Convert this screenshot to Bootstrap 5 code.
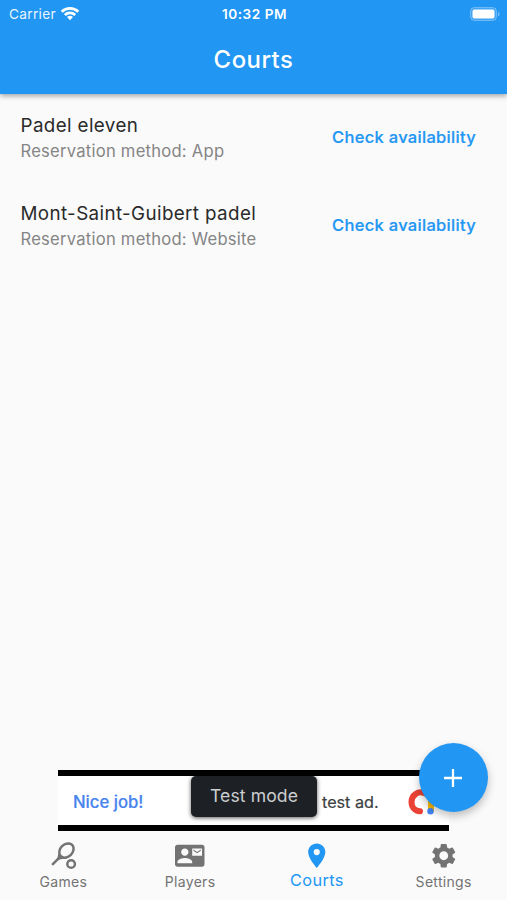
<!DOCTYPE html>
<html lang="en">
<head>
<meta charset="utf-8">
<meta name="viewport" content="width=device-width, initial-scale=1">
<title>Courts</title>
<link rel="stylesheet" href="https://cdn.jsdelivr.net/npm/bootstrap@5.3.0/dist/css/bootstrap.min.css">
<style>
body{font-family:Inter,"Liberation Sans",sans-serif;background:#fafafa;color:#2a2a2a;height:900px;overflow:hidden}
svg{display:block}
.app-top{background:#2196f3;height:94px;box-shadow:0 2px 5px rgba(0,0,0,.35);color:#fff;flex:none}
.status-bar{height:27px;padding:0 7px 0 9px}
.status-bar>div{flex:1 1 0}
.carrier{font-size:13.7px;letter-spacing:.3px;opacity:.9;padding-top:1px}
.clock{font-size:13.6px;font-weight:600;letter-spacing:.5px;padding-top:1px}
.page-title{font-size:23.9px;font-weight:500;letter-spacing:.5px;height:67px}
.court{height:88px;padding:0 31px 0 20.5px}
.court-name{font-size:18.8px;line-height:26px;letter-spacing:.38px}
.court-method{font-size:16.6px;line-height:24px;color:#858585;letter-spacing:.24px}
.court-link{font-size:16.5px;font-weight:500;color:#2196f3;letter-spacing:.3px;-webkit-text-stroke:.2px #2196f3;padding-bottom:2px}
.ad-banner{width:391px;height:61px;background:#fff;border-top:6px solid #000;border-bottom:6px solid #000;margin-left:58px}
.ad-lead{font-size:16.7px;font-weight:500;-webkit-text-stroke:.2px #4884ee;color:#4884ee;left:15px;top:14px;line-height:24px}
.ad-copy{font-size:16.2px;font-weight:400;-webkit-text-stroke:.2px #3c4043;color:#3c4043;left:264px;top:14px;line-height:24px}
.ad-logo{left:348px;top:11px}
.test-chip{left:133px;top:0;width:126px;height:41px;background:#1d2126;color:#ccced0;border-radius:5px;font-size:17.6px;letter-spacing:.1px;box-shadow:0 1px 4px rgba(0,0,0,.65)}
.fab{width:69px;height:69px;left:360.5px;top:-33px;background:#2196f3;box-shadow:0 4px 8px rgba(0,0,0,.25)}
.tabs{height:69px;flex:none;color:#737373;background:#fafafa}
.tab{flex:1 1 0;padding-top:10px;font-size:14px;letter-spacing:.3px;line-height:20px}
.tab svg{margin-bottom:1px}
.tab-on{color:#2196f3;font-size:16.3px;letter-spacing:.4px}
.tab-on svg{margin-bottom:-1px}
</style>
</head>
<body class="d-flex flex-column">
<header class="app-top position-relative">
  <div class="status-bar d-flex align-items-center">
    <div class="d-flex align-items-center gap-1">
      <span class="carrier">Carrier</span>
      <svg width="20" height="15" viewBox="0 0 20 15"><g fill="none" stroke="#fff" stroke-width="2.7"><path d="M1.7 5.7a12 12 0 0 1 16.6 0"/><path d="M4.800 9a7.600 7.600 0 0 1 10.400 0"/></g><path fill="#fff" d="M10 14.200l-3-3.100a4.300 4.300 0 0 1 6 0z"/></svg>
    </div>
    <span class="clock">10:32 PM</span>
    <div class="d-flex justify-content-end">
      <svg width="30" height="14" viewBox="0 0 30 14"><rect x=".5" y=".5" width="26" height="13" rx="4" fill="#fff" fill-opacity=".15" stroke="#fff" stroke-opacity=".3"/><rect x="2.500" y="2.500" width="22" height="9" rx="2" fill="#fff"/><path d="M28 4.700v4.600c2-.8 2-3.800 0-4.600z" fill="#fff" opacity=".4"/></svg>
    </div>
  </div>
  <h1 class="page-title d-flex align-items-center justify-content-center m-0">Courts</h1>
</header>
<main class="flex-grow-1">
  <div class="court d-flex align-items-center justify-content-between">
    <div><div class="court-name">Padel eleven</div><div class="court-method">Reservation method: App</div></div>
    <a class="court-link text-decoration-none" href="#">Check availability</a>
  </div>
  <div class="court d-flex align-items-center justify-content-between">
    <div><div class="court-name">Mont-Saint-Guibert padel</div><div class="court-method">Reservation method: Website</div></div>
    <a class="court-link text-decoration-none" href="#">Check availability</a>
  </div>
</main>
<section class="ad-banner position-relative flex-shrink-0">
  <span class="ad-lead position-absolute text-nowrap">Nice job!</span>
  <span class="ad-copy position-absolute text-nowrap">test ad.</span>
  <svg class="ad-logo position-absolute" width="32" height="30" viewBox="0 0 32 30"><g fill="none" stroke-width="6" stroke-linecap="round"><path stroke="#fbbc04" d="M18 6c5 0 7 4 7 9v8"/><path stroke="#ea4335" d="M19 6.300C12 3 5.500 8.500 5.500 15c0 5 3.500 9 8.500 9.300"/></g><circle cx="24.500" cy="24.300" r="3.200" fill="#4285f4"/></svg>
  <div class="test-chip position-absolute d-flex align-items-center justify-content-center">Test mode</div>
  <button class="fab position-absolute rounded-circle border-0 p-0 d-flex align-items-center justify-content-center" aria-label="Add"><svg width="18" height="18" viewBox="0 0 18 18"><path d="M9 0v18M0 9h18" stroke="#fff" stroke-width="2.300"/></svg></button>
</section>
<nav class="tabs d-flex">
  <div class="tab d-flex flex-column align-items-center">
    <svg width="29.500" height="29.500" viewBox="0 0 24 24" fill="currentColor"><path d="M19.520 2.490c-2.340-2.340-6.620-1.870-9.550 1.060-1.600 1.600-2.520 3.870-2.540 5.460-.020 1.580.260 3.890-1.350 5.500l-4.240 4.240 1.420 1.420 4.240-4.240c1.610-1.610 3.920-1.330 5.500-1.350s3.860-.940 5.460-2.540c2.920-2.930 3.400-7.210 1.060-9.550zm-9.200 9.190c-1.530-1.530-1.050-4.610 1.060-6.720s5.180-2.590 6.720-1.060c1.530 1.530 1.050 4.610-1.060 6.720s-5.180 2.590-6.720 1.060z"/><circle cx="18" cy="18.700" r="3.100" fill="none" stroke="currentColor" stroke-width="2"/></svg>
    Games
  </div>
  <div class="tab d-flex flex-column align-items-center">
    <svg width="29.500" height="29.500" viewBox="0 0 24 24" fill="currentColor"><path d="M21 8V7l-3 2-3-2v1l3 2 3-2zm1-5H2C.9 3 0 3.900 0 5v14c0 1.100.9 2 2 2h20c1.100 0 1.990-.9 1.990-2L24 5c0-1.100-.9-2-2-2zM8 6c1.660 0 3 1.340 3 3s-1.340 3-3 3-3-1.340-3-3 1.340-3 3-3zm6 12H2v-1c0-2 4-3.100 6-3.100s6 1.100 6 3.100v1zm8-6h-8V6h8v6z"/></svg>
    Players
  </div>
  <div class="tab tab-on d-flex flex-column align-items-center">
    <svg width="29.500" height="29.500" viewBox="0 0 24 24" fill="currentColor"><path d="M12 2C8.130 2 5 5.130 5 9c0 5.250 7 13 7 13s7-7.750 7-13c0-3.870-3.130-7-7-7zm0 9.500a2.500 2.500 0 1 1 0-5 2.500 2.500 0 0 1 0 5z"/></svg>
    Courts
  </div>
  <div class="tab d-flex flex-column align-items-center">
    <svg width="29.500" height="29.500" viewBox="0 0 24 24" fill="currentColor"><path d="M19.140 12.940c.040-.3.060-.61.060-.94 0-.32-.020-.64-.070-.94l2.030-1.580c.18-.14.23-.41.12-.61l-1.920-3.320c-.12-.22-.37-.29-.59-.22l-2.390.96c-.5-.38-1.030-.7-1.620-.94l-.36-2.540c-.040-.24-.24-.41-.48-.41h-3.840c-.24 0-.43.17-.47.41l-.36 2.540c-.59.24-1.130.57-1.620.94l-2.390-.96c-.22-.080-.47 0-.59.22L2.740 8.870c-.12.21-.080.47.12.61l2.030 1.580c-.050.3-.090.63-.090.94s.020.64.070.94l-2.030 1.580c-.18.14-.23.41-.12.61l1.920 3.320c.12.22.37.29.59.22l2.390-.96c.5.38 1.030.7 1.620.94l.36 2.540c.050.24.24.41.48.41h3.840c.24 0 .44-.17.47-.41l.36-2.540c.59-.24 1.130-.56 1.620-.94l2.390.96c.22.080.47 0 .59-.22l1.920-3.320c.12-.22.070-.47-.12-.61l-2.010-1.580zM12 15.600c-1.980 0-3.600-1.620-3.600-3.600s1.620-3.600 3.600-3.600 3.600 1.620 3.600 3.600-1.620 3.600-3.600 3.600z"/></svg>
    Settings
  </div>
</nav>
<script src="https://cdn.jsdelivr.net/npm/bootstrap@5.3.0/dist/js/bootstrap.bundle.min.js"></script>
</body>
</html>
